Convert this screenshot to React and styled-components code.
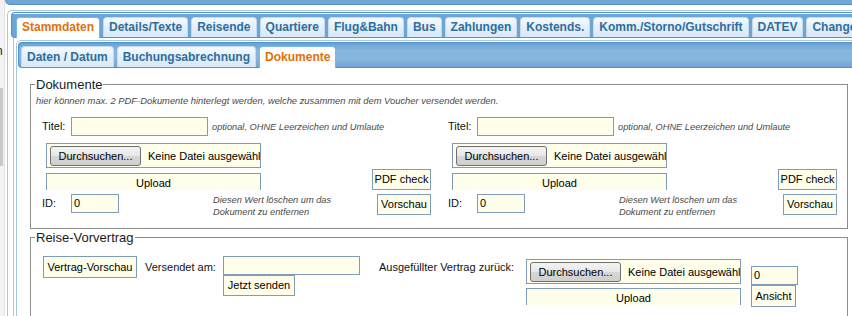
import React from "react";
import styled, { createGlobalStyle } from "styled-components";

const Global = createGlobalStyle`
  html, body { margin: 0; padding: 0; background: #fff; }
  body {
    font-family: "Liberation Sans", Arial, sans-serif;
    font-size: 11px;
    color: #111;
    overflow: hidden;
  }
  * { box-sizing: border-box; }
`;

const Page = styled.div`
  display: flex;
  width: 852px;
  height: 316px;
  overflow: hidden;
`;

const SideStrip = styled.div`
  width: 5px;
  flex-shrink: 0;
  background: #f3f3f5;
  border-right: 1px solid #e2e2e6;
  overflow: hidden;
  display: flex;
  flex-direction: column;
`;

const SideText = styled.span`
  margin: 44px 0 0 -4px;
  font-size: 12px;
  line-height: 14px;
  color: #222;
`;

const SideBar = styled.div`
  margin-top: 30px;
  width: 3px;
  height: 78px;
  background: #c9c9c9;
`;

const Main = styled.div`
  flex: 1;
  min-width: 0;
  overflow: hidden;
`;

const TopBand = styled.div`
  height: 5px;
  background: #6ea6d4;
  border-bottom: 1px solid #4f8ec4;
  border-bottom-left-radius: 5px;
`;

const OuterTabs = styled.div`
  margin: 5px -30px 0 2px;
  border: 1px solid #a6c9e2;
  border-right: none;
  border-bottom: none;
  border-top-left-radius: 5px;
  padding: 1px 0 0 3px;
`;

const TabNav = styled.div`
  display: flex;
  align-items: flex-end;
  gap: ${(p) => p.$gap}px;
  height: ${(p) => p.$h}px;
  padding: ${(p) => p.$pt}px 0 0 ${(p) => p.$pl}px;
  border: 1px solid #4f93cf;
  border-right: none;
  border-radius: 4px 0 0 4px;
  background: ${(p) => p.$bg};
`;

const Tab = styled.div`
  flex-shrink: 0;
  height: ${(p) => (p.$active ? p.$h + 1 : p.$h)}px;
  margin-bottom: ${(p) => (p.$active ? -1 : 0)}px;
  padding: 0 ${(p) => p.$px}px;
  border: 1px solid ${(p) => (p.$active ? "#79b7e7" : "#c5dbec")};
  border-bottom: none;
  border-radius: 4px 4px 0 0;
  background: ${(p) =>
    p.$active ? "#ffffff" : "linear-gradient(#f4f9fe, #e3eefa 55%, #d9e8f7)"};
  color: ${(p) => (p.$active ? "#e17009" : "#2e6e9e")};
  font-weight: bold;
  font-size: 12px;
  line-height: ${(p) => p.$h - 1}px;
  white-space: nowrap;
`;

const OuterPanel = styled.div`
  margin-left: 2px;
  padding: 2px 0 0 2px;
  border-left: 1px solid #a6c9e2;
`;

const InnerTabs = styled.div`
  border: 1px solid #a6c9e2;
  border-right: none;
  border-bottom: none;
  border-top-left-radius: 5px;
  padding: 1px 0 0 1px;
`;

const InnerPanel = styled.div`
  padding: 9px 0 0 12px;
  width: 847px;
`;

const Fieldset = styled.fieldset`
  margin: ${(p) => p.$mt || 0}px 0 0 0;
  padding: ${(p) => p.$pad};
  border: 1px solid #8c8c8c;
  min-width: 0;
  width: 818px;
`;

const Legend = styled.legend`
  padding: 0 1px;
  font-size: 13px;
  line-height: 15px;
  color: #1a1a1a;
`;

const Hint = styled.div`
  margin: 3px 0 0 1px;
  font-style: italic;
  font-size: 9.4px;
  line-height: 12px;
  color: #4a4a4a;
  white-space: nowrap;
`;

const DocGrid = styled.div`
  display: flex;
  gap: 17px;
  margin: 10px 0 0 7px;
`;

const DocBlock = styled.div`
  width: 389px;
  display: flex;
  flex-direction: column;
`;

const Row = styled.div`
  display: flex;
  align-items: ${(p) => p.$align || "center"};
  margin-top: ${(p) => p.$mt || 0}px;
`;

const Label = styled.span`
  width: ${(p) => p.$w}px;
  flex-shrink: 0;
  padding-top: ${(p) => p.$pt || 0}px;
  margin-left: ${(p) => p.$ml || 0}px;
  font-size: 11px;
  line-height: 13px;
  color: #111;
  white-space: nowrap;
`;

const Input = styled.div`
  width: ${(p) => p.$w}px;
  height: 19px;
  flex-shrink: 0;
  border: 1px solid #7f9db9;
  background: #fefeea;
  padding-left: 2px;
  font-size: 11px;
  line-height: 17px;
  color: #000;
`;

const Note = styled.span`
  margin-left: ${(p) => p.$ml}px;
  font-style: italic;
  font-size: 9.25px;
  line-height: 12px;
  color: #4a4a4a;
  white-space: ${(p) => (p.$wrap ? "normal" : "nowrap")};
  width: ${(p) => (p.$wrap ? "130px" : "auto")};
`;

const FileBox = styled.div`
  width: 215px;
  height: 25px;
  margin-left: ${(p) => p.$ml || 0}px;
  flex-shrink: 0;
  display: flex;
  align-items: center;
  padding-left: 3px;
  border: 1px solid #7f9db9;
  background: #fefeea;
  overflow: hidden;
  white-space: nowrap;
`;

const BrowseButton = styled.div`
  width: 91px;
  height: 20px;
  flex-shrink: 0;
  border: 1px solid #707070;
  border-radius: 3px;
  background: linear-gradient(#f4f4f4, #e6e6e6 50%, #d6d6d6 51%, #cfcfcf);
  font-size: 11px;
  line-height: 18px;
  text-align: center;
  color: #000;
`;

const FileName = styled.span`
  margin-left: 7px;
  font-size: 11px;
  color: #000;
`;

const UploadClip = styled.div`
  width: 215px;
  height: 17px;
  margin: ${(p) => p.$mt || 0}px 0 0 ${(p) => p.$ml || 0}px;
  flex-shrink: 0;
  overflow: hidden;
`;

const UploadButton = styled.div`
  height: 21px;
  border: 1px solid #7f9db9;
  background: #fefeea;
  text-align: center;
  font-size: 11px;
  line-height: 19px;
  color: #000;
`;

const Button = styled.div`
  width: ${(p) => p.$w}px;
  height: ${(p) => p.$h || 21}px;
  flex-shrink: 0;
  margin-left: ${(p) => (p.$auto ? "auto" : `${p.$ml || 0}px`)};
  margin-top: ${(p) => p.$mt || 0}px;
  border: 1px solid #7f9db9;
  background: #fefeea;
  font-size: 11px;
  line-height: ${(p) => (p.$h || 21) - 2}px;
  text-align: center;
  color: #000;
  white-space: nowrap;
`;

const Col = styled.div`
  display: flex;
  flex-direction: column;
  flex-shrink: 0;
  margin: ${(p) => p.$mt || 0}px 0 0 ${(p) => p.$ml || 0}px;
`;

const outerTabs = [
  "Stammdaten",
  "Details/Texte",
  "Reisende",
  "Quartiere",
  "Flug&Bahn",
  "Bus",
  "Zahlungen",
  "Kostends.",
  "Komm./Storno/Gutschrift",
  "DATEV",
  "ChangeLog",
];

const innerTabs = ["Daten / Datum", "Buchungsabrechnung", "Dokumente"];

function DocumentBlock() {
  return (
    <DocBlock>
      <Row>
        <Label $w={29}>Titel:</Label>
        <Input $w={137} />
        <Note $ml={4}>optional, OHNE Leerzeichen und Umlaute</Note>
      </Row>
      <Row $mt={7}>
        <FileBox $ml={4}>
          <BrowseButton>Durchsuchen...</BrowseButton>
          <FileName>Keine Datei ausgewählt</FileName>
        </FileBox>
      </Row>
      <Row $mt={1} $align="flex-start">
        <UploadClip $ml={4} $mt={4}>
          <UploadButton>Upload</UploadButton>
        </UploadClip>
        <Button $w={59} $auto>
          PDF check
        </Button>
      </Row>
      <Row $mt={4} $align="flex-start">
        <Label $w={29} $pt={3}>
          ID:
        </Label>
        <Input $w={48}>0</Input>
        <Note $ml={94} $wrap>
          Diesen Wert löschen um das Dokument zu entfernen
        </Note>
        <Button $w={54} $auto>
          Vorschau
        </Button>
      </Row>
    </DocBlock>
  );
}

export default function App() {
  return (
    <>
      <Global />
      <Page>
        <SideStrip>
          <SideText>n</SideText>
          <SideBar />
        </SideStrip>
        <Main>
          <TopBand />
          <OuterTabs>
            <TabNav
              $gap={3}
              $h={26}
              $pt={4}
              $pl={4}
              $bg="linear-gradient(#ffffff 0, #ffffff 1px, #6da5d4 1px, #6da5d4 100%)"
            >
              {outerTabs.map((t, i) => (
                <Tab key={t} $active={i === 0} $h={20} $px={5}>
                  {t}
                </Tab>
              ))}
            </TabNav>
            <OuterPanel>
              <InnerTabs>
                <TabNav
                  $gap={3}
                  $h={26}
                  $pt={3}
                  $pl={2}
                  $bg="linear-gradient(#6aa2d1 0%, #86b5dd 30%, #88b6dd 65%, #6fa5d2 100%)"
                >
                  {innerTabs.map((t, i) => (
                    <Tab key={t} $active={i === 2} $h={21} $px={5}>
                      {t}
                    </Tab>
                  ))}
                </TabNav>
                <InnerPanel>
                  <Fieldset $pad="0 0 10px 4px">
                    <Legend>Dokumente</Legend>
                    <Hint>
                      hier können max. 2 PDF-Dokumente hinterlegt werden, welche
                      zusammen mit dem Voucher versendet werden.
                    </Hint>
                    <DocGrid>
                      <DocumentBlock />
                      <DocumentBlock />
                    </DocGrid>
                  </Fieldset>
                  <Fieldset $mt={1} $pad="11px 0 40px 4px">
                    <Legend>Reise-Vorvertrag</Legend>
                    <Row $align="flex-start">
                      <Button $w={94} $h={22} $ml={8}>
                        Vertrag-Vorschau
                      </Button>
                      <Label $w={78} $ml={8} $pt={5}>
                        Versendet am:
                      </Label>
                      <Col>
                        <Input $w={137} />
                        <Button $w={72} $h={21}>
                          Jetzt senden
                        </Button>
                      </Col>
                      <Label $w={147} $ml={19} $pt={5}>
                        Ausgefüllter Vertrag zurück:
                      </Label>
                      <Col $mt={3}>
                        <FileBox>
                          <BrowseButton>Durchsuchen...</BrowseButton>
                          <FileName>Keine Datei ausgewählt</FileName>
                        </FileBox>
                        <UploadClip $mt={4}>
                          <UploadButton>Upload</UploadButton>
                        </UploadClip>
                      </Col>
                      <Col $mt={10} $ml={10}>
                        <Input $w={47}>0</Input>
                        <Button $w={45} $h={22}>
                          Ansicht
                        </Button>
                      </Col>
                    </Row>
                  </Fieldset>
                </InnerPanel>
              </InnerTabs>
            </OuterPanel>
          </OuterTabs>
        </Main>
      </Page>
    </>
  );
}
